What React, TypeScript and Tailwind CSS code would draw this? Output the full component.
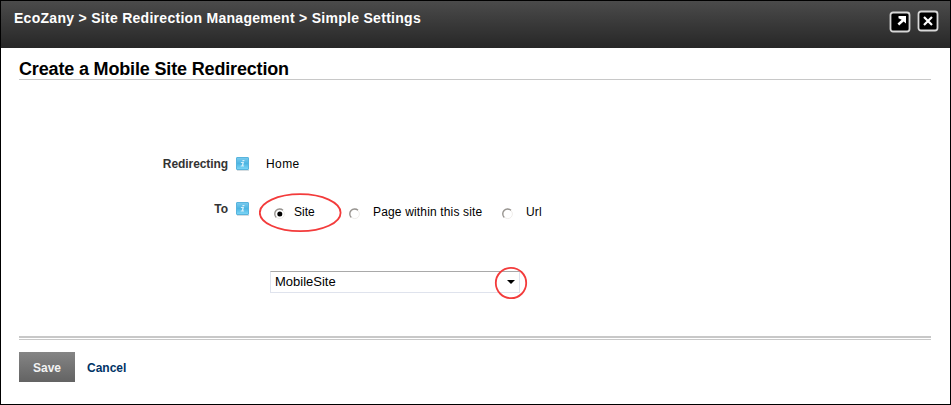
import { ReactNode } from "react";

function HelpIcon() {
  return (
    <svg width="14" height="14" viewBox="0 0 14 14" className="shrink-0">
      <defs>
        <linearGradient id="help" x1="0" y1="0" x2="0" y2="1">
          <stop offset="0" stopColor="#7ccbee" />
          <stop offset="0.5" stopColor="#4db5e2" />
          <stop offset="1" stopColor="#7fd8f8" />
        </linearGradient>
      </defs>
      <rect x="1" y="13" width="12" height="1" fill="#d5dde1" />
      <rect x="0.5" y="0.5" width="12" height="12" rx="0.5" fill="url(#help)" stroke="#58b4dd" />
      <path d="M6.6 3h2l-.4 1.3h-2zM5 5h3L7.2 8.5h1l-.3 1H4.6l.2-1h1l.6-2.5H4.8z" fill="#d4effa" />
    </svg>
  );
}

function Radio({ checked = false }: { checked?: boolean }) {
  return (
    <svg width="12" height="12" viewBox="0 0 12 12" className="mt-1 shrink-0">
      <circle cx="6.8" cy="6" r="4.6" fill="#fff" stroke="#efedea" />
      <path d="M3.3 9.5A4.7 4.7 0 0 1 10 2.3" fill="none" stroke="#96938f" strokeWidth="1.3" />
      {checked && <circle cx="6.8" cy="6" r="2.5" fill="#000" />}
    </svg>
  );
}

function HeaderButton({ label, className, children }: { label: string; className?: string; children: ReactNode }) {
  return (
    <button aria-label={label} className={className}>
      <svg width="22" height="22" viewBox="0 0 22 22">
        <rect x="1.5" y="1.5" width="19" height="19" rx="2.5" fill="#000" stroke="#d8d8d8" strokeWidth="1.8" />
        {children}
      </svg>
    </button>
  );
}

export default function App() {
  return (
    <div className="flex h-[405px] w-[951px] flex-col border border-black bg-white font-['Liberation_Sans',Arial,sans-serif] text-black">
      <header className="flex h-[47px] shrink-0 items-start justify-between bg-linear-to-b from-[#4b4b4b] to-[#272727] pl-[13px] pr-[11px]">
        <div className="mt-[9px] whitespace-nowrap text-[14px] leading-4 font-bold tracking-[0.285px] text-white">
          EcoZany &gt; Site Redirection Management &gt; Simple Settings
        </div>
        <div className="flex gap-1.5">
          <HeaderButton label="Expand" className="mt-[10px] h-[22px]">
            <path d="M9.500 5h7.500v7.500l-2.400-2.100-4.400 4-1.700-1.800 4.200-3.800-3.200-1.600z" fill="#fff" />
          </HeaderButton>
          <HeaderButton label="Close" className="mt-[9px] h-[22px]">
            <path d="M7 7l8 8M15 7l-8 8" stroke="#fff" strokeWidth="2.2" />
          </HeaderButton>
        </div>
      </header>

      <main className="flex flex-col pl-[18px] pr-[19px]">
        <h1 className="h-8 border-b border-[#c8c8c8] pt-[11px] text-[18px] leading-5 font-bold tracking-[-0.16px] whitespace-nowrap">
          Create a Mobile Site Redirection
        </h1>

        <div className="mt-[76px] flex h-4 text-[12px] leading-4">
          <div className="w-[209px] text-right font-bold tracking-[-0.08px] text-[#333]">Redirecting</div>
          <div className="ml-2 mt-px"><HelpIcon /></div>
          <div className="ml-4 tracking-[0.4px]">Home</div>
        </div>

        <div className="mt-8 flex h-4 text-[12px] leading-4">
          <div className="-mt-[3px] w-[209px] text-right font-bold text-[#333]">To</div>
          <div className="ml-2 -mt-[2px]"><HelpIcon /></div>
          <div className="relative ml-[23px] flex">
            <Radio checked />
            <span className="ml-[9px] w-[54px]">Site</span>
            <svg className="absolute -top-[12px] -left-[14px]" width="84" height="42" viewBox="0 0 84 42">
              <ellipse cx="41.2" cy="20.700" rx="40.400" ry="18.500" fill="none" stroke="#f33b3b" strokeWidth="1.8" />
            </svg>
          </div>
          <Radio />
          <span className="ml-[13px] w-[128px] whitespace-nowrap tracking-[0.16px]">Page within this site</span>
          <Radio />
          <span className="ml-[13px] tracking-[0.2px]">Url</span>
        </div>

        <div className="relative mt-[51px] ml-[251px] flex h-[22px] w-[250px] items-center justify-between border border-[#dfe3ed] border-t-[#a9a9a9] pl-1 pr-1 text-[13px] leading-5">
          <span>MobileSite</span>
          <svg width="8" height="4" viewBox="0 0 8 4"><path d="M0 0h8L4 4z" /></svg>
          <svg className="absolute -top-[6px] left-[223px]" width="34" height="34" viewBox="0 0 34 34">
            <circle cx="17" cy="17" r="15.2" fill="none" stroke="#f33b3b" strokeWidth="1.8" />
          </svg>
        </div>

        <div className="mt-[43px] h-1 border-t-2 border-b border-[#c8c8c8]" />

        <div className="mt-3 flex items-center text-[12px] font-bold">
          <button className="h-[30px] w-14 bg-linear-to-b from-[#858585] to-[#636363] pt-0.5 text-[#f2f2f2]">Save</button>
          <a className="ml-3 pt-0.5 text-[#003366]">Cancel</a>
        </div>
      </main>
    </div>
  );
}
